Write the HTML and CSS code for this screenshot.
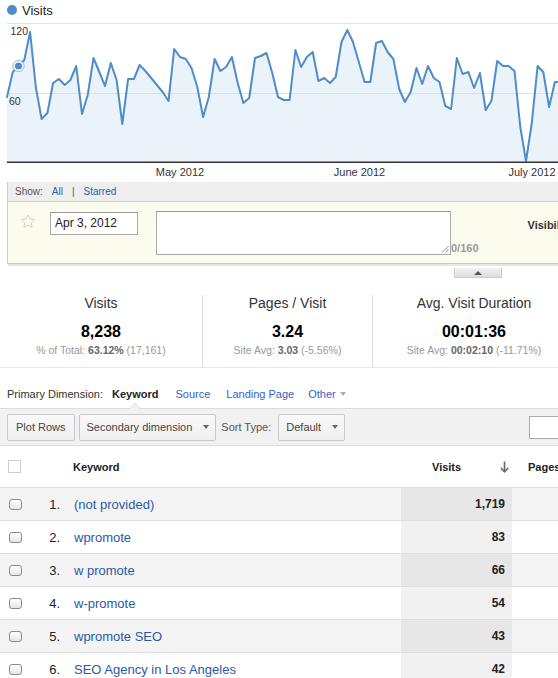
FILE: index.html
```html
<!DOCTYPE html>
<html>
<head>
<meta charset="utf-8">
<title>Visits</title>
<link rel="stylesheet" href="styles.css">
</head>
<body>
<div class="page">
  <div class="legend"><span class="dot"></span><span>Visits</span></div>
  <svg class="chart" width="558" height="160" viewBox="0 22 558 160" xmlns="http://www.w3.org/2000/svg">
    <line x1="7" y1="23.5" x2="558" y2="23.5" stroke="#e4e4e4" stroke-width="1"/>
    <polygon fill="#eaf2fa" points="7,97 12.8,72 18.5,66 24.3,60 30.1,32 35.8,87 41.6,119 47.4,113 53.1,83 58.9,79 64.7,85 70.4,80 76.2,66 82,114 87.7,95 93.5,58 99.3,72 105,86 110.8,63 116.6,80 122.3,124 128.1,79 133.9,79 139.6,65 145.4,71 151.2,78 156.9,85 162.7,92 168.5,101 174.2,49 180,57 185.8,59 191.5,68 197.3,87 203.1,117 208.8,97 214.6,59 220.4,71 226.1,67 231.9,57 237.7,83 243.4,103 249.2,98 255,58 260.7,56 266.5,53 272.3,73 278,97 283.8,100 289.6,100 295.4,50 301.1,67 306.9,57 312.7,52 318.4,81 324.2,78 330,83 335.7,77 341.5,42 347.3,30 353,42 358.8,62 364.6,82 370.3,82 376.1,43 381.9,41 387.6,52 393.4,59 399.2,89 404.9,102 410.7,92 416.5,68 422.2,84 428,66 433.8,78 439.5,82 445.3,106 451.1,109 456.8,58 462.6,74 468.4,72 474.1,88 479.9,73 485.7,110 491.4,101 497.2,61 503,66 508.7,66 514.5,71 520.3,127 526,161 531.8,123 537.6,66 543.3,72 549.1,107 554.9,82 560.6,82 560.6,162 7,162"/>
    <line x1="7" y1="93.5" x2="558" y2="93.5" stroke="#d9e1ea" stroke-width="1"/>
    <polyline fill="none" stroke="#4f8dc9" stroke-width="2" stroke-linejoin="round" stroke-linecap="round" points="7,97 12.8,72 18.5,66 24.3,60 30.1,32 35.8,87 41.6,119 47.4,113 53.1,83 58.9,79 64.7,85 70.4,80 76.2,66 82,114 87.7,95 93.5,58 99.3,72 105,86 110.8,63 116.6,80 122.3,124 128.1,79 133.9,79 139.6,65 145.4,71 151.2,78 156.9,85 162.7,92 168.5,101 174.2,49 180,57 185.8,59 191.5,68 197.3,87 203.1,117 208.8,97 214.6,59 220.4,71 226.1,67 231.9,57 237.7,83 243.4,103 249.2,98 255,58 260.7,56 266.5,53 272.3,73 278,97 283.8,100 289.6,100 295.4,50 301.1,67 306.9,57 312.7,52 318.4,81 324.2,78 330,83 335.7,77 341.5,42 347.3,30 353,42 358.8,62 364.6,82 370.3,82 376.1,43 381.9,41 387.6,52 393.4,59 399.2,89 404.9,102 410.7,92 416.5,68 422.2,84 428,66 433.8,78 439.5,82 445.3,106 451.1,109 456.8,58 462.6,74 468.4,72 474.1,88 479.9,73 485.7,110 491.4,101 497.2,61 503,66 508.7,66 514.5,71 520.3,127 526,161 531.8,123 537.6,66 543.3,72 549.1,107 554.9,82 560.6,82"/>
    <line x1="7" y1="162.2" x2="558" y2="162.2" stroke="#333" stroke-width="1.5"/>
    <text class="axis" x="10.5" y="35.3">120</text>
    <text class="axis" x="9" y="105">60</text>
    <circle cx="18.5" cy="66" r="5.6" fill="#fff" stroke="#8fb6dd" stroke-width="1"/>
    <circle cx="18.5" cy="66" r="3.6" fill="#4f8dc9"/>
    <text class="month" x="180" y="176" text-anchor="middle">May 2012</text>
    <text class="month" x="359.5" y="176" text-anchor="middle">June 2012</text>
    <text class="month" x="532" y="176" text-anchor="middle">July 2012</text>
  </svg>

  <div class="annot">
    <div class="annot-head">
      <span>Show:</span><a class="lnk">All</a><span class="sep">|</span><a class="lnk">Starred</a>
    </div>
    <div class="annot-body">
      <svg class="star" width="16" height="17" viewBox="0 0 24 24" xmlns="http://www.w3.org/2000/svg">
        <path d="M12 2.2l2.95 6.3 6.85.85-5.05 4.7 1.35 6.8L12 17.4l-6.1 3.45 1.35-6.8-5.050-4.7 6.85-.85z" fill="none" stroke="#c9c9c9" stroke-width="1.2" stroke-linejoin="round"/>
      </svg>
      <div class="date-input">Apr 3, 2012</div>
      <div class="note-wrap">
        <div class="textarea">
          <svg class="grip" width="8" height="8" viewBox="0 0 8 8" xmlns="http://www.w3.org/2000/svg">
            <line x1="1" y1="7.5" x2="7.5" y2="1" stroke="#888" stroke-width="0.9"/>
            <line x1="4.5" y1="7.5" x2="7.5" y2="4.5" stroke="#888" stroke-width="0.9"/>
          </svg>
        </div>
        <span class="count">0/160</span>
      </div>
      <div class="visib">Visibility:</div>
    </div>
  </div>
  <div class="tab-row"><div class="tab"><span class="up"></span></div></div>

  <div class="metrics">
    <div class="metric m1">
      <div class="m-title">Visits</div>
      <div class="m-value">8,238</div>
      <div class="m-sub">% of Total: <b>63.12%</b> (17,161)</div>
    </div>
    <div class="metric m2">
      <div class="m-title">Pages / Visit</div>
      <div class="m-value">3.24</div>
      <div class="m-sub">Site Avg: <b>3.03</b> (-5.56%)</div>
    </div>
    <div class="metric m3">
      <div class="m-title">Avg. Visit Duration</div>
      <div class="m-value">00:01:36</div>
      <div class="m-sub">Site Avg: <b>00:02:10</b> (-11.71%)</div>
    </div>
  </div>

  <div class="pd-row">
    <span>Primary Dimension:</span>
    <span class="kw">Keyword</span>
    <a class="dlnk src">Source</a>
    <a class="dlnk lp">Landing Page</a>
    <a class="dlnk oth">Other</a><span class="caret-light"></span>
  </div>

  <div class="toolbar">
    <div class="btn">Plot Rows</div>
    <div class="btn sec">Secondary dimension<span class="caret"></span></div>
    <span class="sort-lbl">Sort Type:</span>
    <div class="btn def">Default<span class="caret"></span></div>
    <div class="search"></div>
  </div>

  <div class="grid head">
    <div class="c-check"><span class="hbox"></span></div>
    <div></div>
    <div class="c-kw">Keyword</div>
    <div class="c-visits-h">Visits
      <svg class="sort-arrow" width="9" height="12" viewBox="0 0 9 12" xmlns="http://www.w3.org/2000/svg">
        <line x1="4.5" y1="0.5" x2="4.5" y2="10.5" stroke="#666" stroke-width="1.6"/>
        <polyline points="0.8,7 4.5,10.8 8.2,7" fill="none" stroke="#666" stroke-width="1.6"/>
      </svg>
    </div>
    <div class="c-pages">Pages / Visit</div>
  </div>

  <div class="grid row odd">
    <div class="c-check"><span class="cbox"></span></div>
    <div class="c-num">1.</div>
    <div class="c-kw"><a class="rlnk">(not provided)</a></div>
    <div class="c-visits">1,719</div>
    <div></div>
  </div>
  <div class="grid row">
    <div class="c-check"><span class="cbox"></span></div>
    <div class="c-num">2.</div>
    <div class="c-kw"><a class="rlnk">wpromote</a></div>
    <div class="c-visits">83</div>
    <div></div>
  </div>
  <div class="grid row odd">
    <div class="c-check"><span class="cbox"></span></div>
    <div class="c-num">3.</div>
    <div class="c-kw"><a class="rlnk">w promote</a></div>
    <div class="c-visits">66</div>
    <div></div>
  </div>
  <div class="grid row">
    <div class="c-check"><span class="cbox"></span></div>
    <div class="c-num">4.</div>
    <div class="c-kw"><a class="rlnk">w-promote</a></div>
    <div class="c-visits">54</div>
    <div></div>
  </div>
  <div class="grid row odd">
    <div class="c-check"><span class="cbox"></span></div>
    <div class="c-num">5.</div>
    <div class="c-kw"><a class="rlnk">wpromote SEO</a></div>
    <div class="c-visits">43</div>
    <div></div>
  </div>
  <div class="grid row">
    <div class="c-check"><span class="cbox"></span></div>
    <div class="c-num">6.</div>
    <div class="c-kw"><a class="rlnk">SEO Agency in Los Angeles</a></div>
    <div class="c-visits">42</div>
    <div></div>
  </div>
</div>
</body>
</html>
```

FILE: styles.css
```css
html, body {
  margin: 0;
  padding: 0;
}
body {
  font-family: "Liberation Sans", Arial, Helvetica, sans-serif;
  color: #333;
  background: #fff;
  width: 558px;
  height: 678px;
  overflow: hidden;
}
.page {
  width: 558px;
  height: 678px;
  overflow: hidden;
}

/* legend + chart */
.legend {
  height: 20px;
  margin-bottom: 2px;
  padding-left: 7px;
  display: flex;
  align-items: center;
  gap: 5px;
  font-size: 13px;
  color: #222;
}
.legend .dot {
  width: 10px;
  height: 10px;
  border-radius: 50%;
  background: #4f8dc9;
}
.chart {
  display: block;
}
.chart .axis {
  font-family: "Liberation Sans", Arial, sans-serif;
  font-size: 10.5px;
  fill: #333;
}
.chart .month {
  font-family: "Liberation Sans", Arial, sans-serif;
  font-size: 11px;
  fill: #333;
}

/* annotation panel */
.annot {
  margin-left: 7px;
  border-left: 1px solid #cfcfcf;
  width: 600px;
}
.annot-head {
  height: 19px;
  background: #eeeeee;
  border-bottom: 1px solid #cfcfcf;
  display: flex;
  align-items: center;
  padding-left: 7px;
  gap: 9px;
  font-size: 10px;
  color: #555;
}
.lnk {
  color: #2f5ca8;
  text-decoration: none;
}
.sep {
  color: #555;
}
.annot-body {
  height: 62px;
  box-sizing: border-box;
  background: #fcfcee;
  border-bottom: 1px solid #c8c8c8;
  box-shadow: 0 2px 0 #e6e6e6;
  display: flex;
  align-items: flex-start;
  padding: 9px 0 0 12px;
}
.star {
  display: block;
  margin-top: 2px;
  flex-shrink: 0;
}
.date-input {
  margin-left: 14px;
  margin-top: 1px;
  width: 88px;
  height: 23px;
  box-sizing: border-box;
  border: 1px solid #aaa;
  border-top-color: #999;
  background: #fff;
  font-size: 12px;
  color: #222;
  line-height: 21px;
  padding-left: 4px;
  flex-shrink: 0;
}
.note-wrap {
  margin-left: 18px;
  display: flex;
  align-items: flex-end;
  flex-shrink: 0;
}
.textarea {
  position: relative;
  width: 295px;
  height: 44px;
  box-sizing: border-box;
  border: 1px solid #aaa;
  border-top-color: #999;
  background: #fff;
}
.grip {
  position: absolute;
  right: 1px;
  bottom: 1px;
}
.count {
  font-size: 11px;
  font-weight: bold;
  color: #9a9a9a;
  line-height: 12px;
  padding-bottom: 1px;
}
.visib {
  margin-left: 49px;
  margin-top: 8px;
  font-size: 11px;
  font-weight: bold;
  color: #333;
  white-space: nowrap;
}
.tab-row {
  margin-top: 4px;
  padding-left: 454px;
  display: flex;
}
.tab {
  width: 48px;
  height: 10px;
  box-sizing: border-box;
  border: 1px solid #ccc;
  border-top: none;
  background: linear-gradient(#f3f3f3, #dcdcdc);
  display: flex;
  align-items: center;
  justify-content: center;
}
.up {
  width: 0;
  height: 0;
  border-left: 4px solid transparent;
  border-right: 4px solid transparent;
  border-bottom: 4px solid #555;
}

/* metrics */
.metrics {
  margin-top: 17px;
  display: flex;
  border-bottom: 1px solid #e6e6e6;
  width: 620px;
}
.metric {
  text-align: center;
  padding-bottom: 10px;
  flex-shrink: 0;
}
.m1 {
  width: 202px;
  border-right: 1px solid #dddddd;
}
.m2 {
  width: 169px;
  border-right: 1px solid #dddddd;
}
.m3 {
  width: 202px;
}
.m-title {
  font-size: 14px;
  line-height: 16px;
  color: #333;
}
.m-value {
  margin-top: 10px;
  font-size: 16px;
  line-height: 22px;
  font-weight: bold;
  color: #000;
}
.m-sub {
  font-size: 10.5px;
  line-height: 14px;
  color: #999;
}
.m-sub b {
  color: #666;
}

/* primary dimension row */
.pd-row {
  height: 40px;
  box-sizing: border-box;
  padding: 12px 0 0 7px;
  display: flex;
  align-items: center;
  font-size: 11px;
  color: #333;
  white-space: nowrap;
}
.kw {
  position: relative;
  margin-left: 9px;
  font-weight: bold;
  line-height: 14px;
  color: #222;
}
.kw::before {
  content: "";
  position: absolute;
  left: 50%;
  margin-left: -6px;
  top: 16px;
  width: 0;
  height: 0;
  border-left: 6px solid transparent;
  border-right: 6px solid transparent;
  border-bottom: 6px solid #d6d6d6;
}
.kw::after {
  content: "";
  position: absolute;
  left: 50%;
  margin-left: -5px;
  top: 17px;
  width: 0;
  height: 0;
  border-left: 5px solid transparent;
  border-right: 5px solid transparent;
  border-bottom: 5px solid #f1f1f1;
}
.dlnk {
  color: #3a5fc4;
  text-decoration: none;
}
.src { margin-left: 17px; }
.lp { margin-left: 16px; }
.oth { margin-left: 14px; }
.caret-light {
  margin-left: 4px;
  width: 0;
  height: 0;
  border-left: 3.5px solid transparent;
  border-right: 3.5px solid transparent;
  border-top: 4px solid #aaa;
}

/* toolbar */
.toolbar {
  width: 612px;
  height: 38px;
  box-sizing: border-box;
  border-top: 1px solid #dcdcdc;
  border-bottom: 1px solid #dcdcdc;
  background: #f1f1f1;
  display: flex;
  align-items: center;
  padding: 0 7px;
  font-size: 11px;
  white-space: nowrap;
}
.btn {
  height: 27px;
  box-sizing: border-box;
  border: 1px solid #c8c8c8;
  border-radius: 2px;
  background: linear-gradient(#f9f9f9, #f0f0f0);
  padding: 0 8px;
  display: flex;
  align-items: center;
  color: #444;
  flex-shrink: 0;
}
.sec {
  margin-left: 4px;
  padding: 0 6px 0 7px;
}
.def {
  margin-left: 7px;
  padding: 0 6px 0 7px;
}
.caret {
  margin-left: 11px;
  width: 0;
  height: 0;
  border-left: 3.5px solid transparent;
  border-right: 3.5px solid transparent;
  border-top: 4px solid #666;
}
.sort-lbl {
  margin-left: 5px;
  color: #555;
}
.search {
  margin-left: auto;
  width: 76px;
  height: 23px;
  box-sizing: border-box;
  border: 1px solid #aaa;
  background: #fff;
  flex-shrink: 0;
}

/* table */
.grid {
  display: grid;
  grid-template-columns: 40px 24px 337px 111px 100px;
  width: 612px;
  border-bottom: 1px solid #dedede;
}
.head {
  height: 42px;
  box-sizing: border-box;
  align-items: center;
  font-size: 11px;
  font-weight: bold;
  color: #222;
}
.head .c-check {
  padding-left: 8px;
  display: flex;
}
.hbox {
  width: 13px;
  height: 13px;
  box-sizing: border-box;
  border: 1px solid #cfcfcf;
  background: #fff;
}
.head .c-kw {
  padding-left: 9px;
}
.c-visits-h {
  display: flex;
  align-items: center;
  padding-left: 31px;
  padding-right: 3px;
}
.sort-arrow {
  margin-left: auto;
  display: block;
}
.c-pages {
  padding-left: 16px;
  white-space: nowrap;
}
.row {
  height: 33px;
  box-sizing: border-box;
  align-items: center;
  background: #fff;
}
.row.odd {
  background: #f4f4f4;
}
.row .c-check {
  padding-left: 9px;
  display: flex;
}
.cbox {
  width: 13px;
  height: 11px;
  box-sizing: border-box;
  border: 1px solid #8a8a8a;
  border-radius: 3px;
  background: linear-gradient(#ffffff, #e6e6e6);
}
.c-num {
  text-align: right;
  padding-right: 4px;
  font-size: 13px;
  color: #222;
}
.row .c-kw {
  padding-left: 10px;
  font-size: 13px;
  white-space: nowrap;
}
.rlnk {
  color: #2b5aa5;
  text-decoration: none;
}
.c-visits {
  align-self: stretch;
  display: flex;
  align-items: center;
  justify-content: flex-end;
  padding-right: 7px;
  font-size: 12px;
  font-weight: bold;
  color: #222;
  background: #f1f1f1;
}
.row.odd .c-visits {
  background: #e7e7e7;
}
```
